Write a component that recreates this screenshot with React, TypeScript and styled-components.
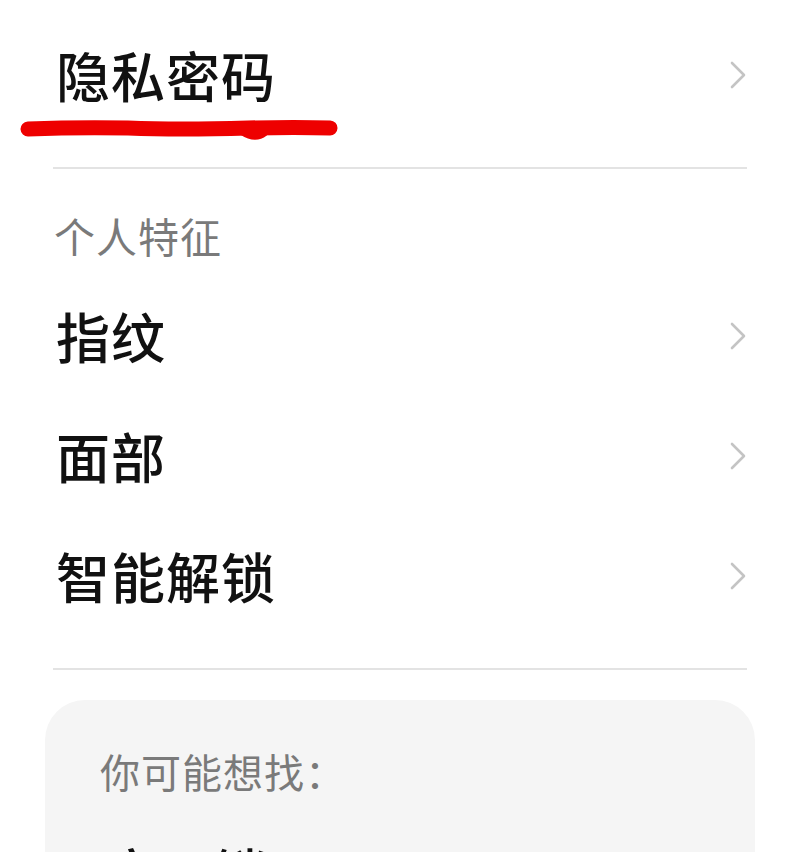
import styled, { createGlobalStyle } from "styled-components";

const GlobalStyle = createGlobalStyle`
  html, body {
    margin: 0;
    padding: 0;
    background: #ffffff;
  }
  body {
    font-family: "Noto Sans CJK SC", "Noto Sans", sans-serif;
    color: #111111;
    overflow: hidden;
  }
`;

const Page = styled.div`
  width: 800px;
  height: 852px;
  overflow: hidden;
  box-sizing: border-box;
  padding: 15px 53px 0;
`;

const Row = styled.div`
  position: relative;
  height: 120px;
  display: flex;
  align-items: center;
  justify-content: space-between;
`;

const RowLabel = styled.span`
  padding-left: 3px;
  font-size: 54px;
  line-height: 1;
  font-weight: 500;
  color: #111111;
  letter-spacing: 1px;
`;

const Divider = styled.div<{ $top: number }>`
  height: 2px;
  background: #e3e3e3;
  margin-top: ${(p) => p.$top}px;
`;

const SectionHeader = styled.div`
  margin-top: 36px;
  margin-bottom: 11px;
  height: 60px;
  display: flex;
  align-items: center;
  padding-left: 1px;
  font-size: 41px;
  color: #7a7a7a;
  letter-spacing: 1px;
`;

const Underline = styled.svg`
  position: absolute;
  left: -35px;
  top: 102px;
  overflow: visible;
`;

const Card = styled.div`
  margin: 30px -8px 0;
  background: #f5f5f5;
  border-radius: 40px;
  padding: 51px 55px 0;
  height: 400px;
`;

const CardTitle = styled.div`
  font-size: 40px;
  line-height: 40px;
  color: #7a7a7a;
  letter-spacing: 1px;
`;

const CardRow = styled.div`
  margin-top: 21px;
  height: 120px;
  display: flex;
  align-items: center;
`;

const Chevron = () => (
  <svg width="18" height="30" viewBox="0 0 18 30">
    <polyline
      points="3,3 15,15 3,27"
      fill="none"
      stroke="#c4c4c4"
      strokeWidth="2.6"
      strokeLinecap="round"
      strokeLinejoin="round"
    />
  </svg>
);

const items = ["指纹", "面部", "智能解锁"];

export default function App() {
  return (
    <>
      <GlobalStyle />
      <Page>
        <Row>
          <RowLabel>隐私密码</RowLabel>
          <Chevron />
          <Underline width="330" height="40" viewBox="0 0 330 40">
            <path
              d="M10 12 Q 60 10 110 11 Q 160 13 230 11 Q 280 10 312 11"
              fill="none"
              stroke="#ee0000"
              strokeWidth="15"
              strokeLinecap="round"
            />
            <path
              d="M225 14 Q 237 22 246 15"
              fill="none"
              stroke="#ee0000"
              strokeWidth="9"
              strokeLinecap="round"
            />
          </Underline>
        </Row>
        <Divider $top={32} />
        <SectionHeader>个人特征</SectionHeader>
        {items.map((label) => (
          <Row key={label}>
            <RowLabel>{label}</RowLabel>
            <Chevron />
          </Row>
        ))}
        <Divider $top={32} />
        <Card>
          <CardTitle>你可能想找：</CardTitle>
          <CardRow>
            <RowLabel>应用锁</RowLabel>
          </CardRow>
        </Card>
      </Page>
    </>
  );
}
